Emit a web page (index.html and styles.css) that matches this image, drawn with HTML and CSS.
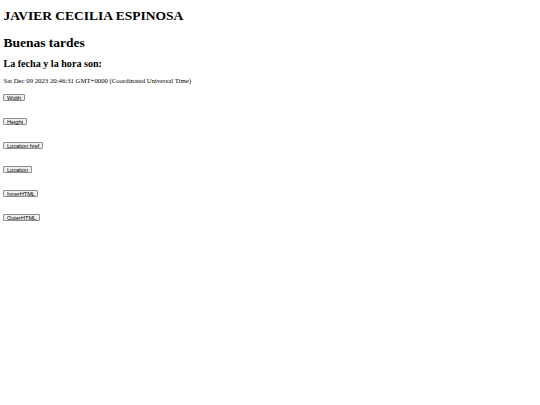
FILE: index.html
```html
<!DOCTYPE html>
<html lang="es">
<head>
<meta charset="utf-8">
<title>Javier Cecilia Espinosa</title>
<link rel="stylesheet" href="styles.css">
</head>
<body>
<h1 class="title">JAVIER CECILIA ESPINOSA</h1>
<h1 class="greeting">Buenas tardes</h1>
<h2 class="subtitle">La fecha y la hora son:</h2>
<p class="date">Sat Dec 09 2023 20:46:31 GMT+0000 (Coordinated Universal Time)</p>
<div class="buttons">
  <button class="btn">Width</button>
  <button class="btn">Height</button>
  <button class="btn">Location href</button>
  <button class="btn">Location</button>
  <button class="btn">InnerHTML</button>
  <button class="btn">OuterHTML</button>
</div>
</body>
</html>
```
FILE: styles.css
```css
html, body {
  background: #ffffff;
}
body {
  margin: 0;
  padding: 0 3.4px;
  font-family: "Liberation Serif", "Times New Roman", serif;
  color: #000000;
}
.title {
  font-size: 13.5px;
  line-height: 15.5px;
  font-weight: bold;
  margin: 0;
  padding-top: 8.25px;
}
.greeting {
  font-size: 13.5px;
  line-height: 15.5px;
  font-weight: bold;
  margin: 10.8px 0 0;
}
.subtitle {
  font-size: 10.125px;
  line-height: 11.6px;
  font-weight: bold;
  margin: 8.45px 0 0;
}
.date {
  font-size: 6.75px;
  line-height: 7.8px;
  margin: 7px 0 0;
}
.buttons {
  display: flex;
  flex-direction: column;
  align-items: flex-start;
  gap: 17px;
  margin-top: 9.6px;
}
.btn {
  font-family: "Liberation Sans", Arial, sans-serif;
  font-size: 5.625px;
  line-height: 6px;
  height: 7px;
  padding: 0 2.5px;
  margin: 0;
  background: #efefef;
  color: #000000;
  border: 0.5px solid #8f8f8f;
  border-radius: 1px;
}
```
